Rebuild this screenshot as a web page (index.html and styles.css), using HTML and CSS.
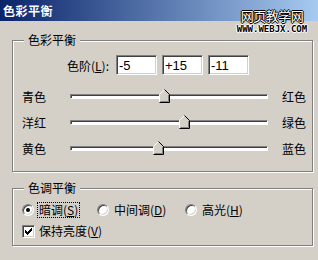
FILE: index.html
```html
<!DOCTYPE html>
<html>
    <head>
        <meta charset="utf-8">
        <title>色彩平衡</title>
        <link rel="stylesheet" href="styles.css">
    </head>
    <body>
        <div class="window">
            <div class="titlebar">
                <span class="title">色彩平衡</span>
                <div class="watermark">
                    <span class="wm-cn">网页教学网</span>
                    <span class="wm-url">WWW.WEBJX.COM</span>
                </div>
            </div>

            <div class="content">
                <fieldset class="group group-balance">
                    <legend>色彩平衡</legend>

                    <div class="levels">
                        <span class="levels-label">色阶(<u>L</u>):</span>
                        <input class="field" type="text" value="-5">
                        <input class="field" type="text" value="+15">
                        <input class="field" type="text" value="-11">
                    </div>

                    <div class="sliders">
                        <span class="lbl">青色</span>
                        <div class="track">
                            <svg class="thumb" style="left: 47.5%;" width="11" height="14" viewBox="0 0 11 14">
                                <polygon points="5.5,0.5 10.5,5.5 10.5,13.5 0.5,13.5 0.5,5.5" fill="#d4d0c8"/>
                                <polyline points="0.5,13 0.5,5.5 5.5,0.5" fill="none" stroke="#fff"/>
                                <polyline points="5.5,0.5 10.5,5.5 10.5,13.5 0.5,13.5" fill="none" stroke="#000"/>
                                <polyline points="9.5,6 9.5,12.5 1.5,12.5" fill="none" stroke="#808080"/>
                            </svg>
                        </div>
                        <span class="lbl lbl-right">红色</span>

                        <span class="lbl">洋红</span>
                        <div class="track">
                            <svg class="thumb" style="left: 57.5%;" width="11" height="14" viewBox="0 0 11 14">
                                <polygon points="5.5,0.5 10.5,5.5 10.5,13.5 0.5,13.5 0.5,5.5" fill="#d4d0c8"/>
                                <polyline points="0.5,13 0.5,5.5 5.5,0.5" fill="none" stroke="#fff"/>
                                <polyline points="5.5,0.5 10.5,5.5 10.5,13.5 0.5,13.5" fill="none" stroke="#000"/>
                                <polyline points="9.5,6 9.5,12.5 1.5,12.5" fill="none" stroke="#808080"/>
                            </svg>
                        </div>
                        <span class="lbl lbl-right">绿色</span>

                        <span class="lbl">黄色</span>
                        <div class="track">
                            <svg class="thumb" style="left: 44.5%;" width="11" height="14" viewBox="0 0 11 14">
                                <polygon points="5.5,0.5 10.5,5.5 10.5,13.5 0.5,13.5 0.5,5.5" fill="#d4d0c8"/>
                                <polyline points="0.5,13 0.5,5.5 5.5,0.5" fill="none" stroke="#fff"/>
                                <polyline points="5.5,0.5 10.5,5.5 10.5,13.5 0.5,13.5" fill="none" stroke="#000"/>
                                <polyline points="9.5,6 9.5,12.5 1.5,12.5" fill="none" stroke="#808080"/>
                            </svg>
                        </div>
                        <span class="lbl lbl-right">蓝色</span>
                    </div>
                </fieldset>

                <fieldset class="group group-tone">
                    <legend>色调平衡</legend>

                    <div class="radios">
                        <label class="opt">
                            <span class="radio checked"></span>
                            <span class="opt-text focus">暗调(<u>S</u>)</span>
                        </label>
                        <label class="opt">
                            <span class="radio"></span>
                            <span class="opt-text">中间调(<u>D</u>)</span>
                        </label>
                        <label class="opt">
                            <span class="radio"></span>
                            <span class="opt-text">高光(<u>H</u>)</span>
                        </label>
                    </div>

                    <label class="opt opt-check">
                        <span class="check">
                            <svg width="7" height="7" viewBox="0 0 7 7">
                                <path d="M0 2h1v3H0zM1 3h1v3H1zM2 4h1v3H2zM3 3h1v3H3zM4 2h1v3H4zM5 1h1v3H5zM6 0h1v3H6z" fill="#000"/>
                            </svg>
                        </span>
                        <span class="opt-text">保持亮度(<u>V</u>)</span>
                    </label>
                </fieldset>
            </div>
        </div>
    </body>
</html>
```

FILE: styles.css
```css
body{
    margin: 0;
    background-color: #d4d0c8;
    font-family: "Noto Sans CJK SC", "Noto Sans", sans-serif;
    font-size: 12px;
    color: #000;
}
.window{
    width: 318px;
    height: 260px;
    overflow: hidden;
}

/* title bar */
.titlebar{
    position: relative;
    height: 21px;
    background: linear-gradient(to right, #0a246a, #a6caf0);
}
.title{
    display: block;
    padding-left: 3px;
    line-height: 21px;
    color: #fff;
    font-weight: bold;
    font-size: 12px;
    letter-spacing: 0.5px;
}
.watermark{
    position: absolute;
    left: 236px;
    top: 9px;
    width: 72px;
    display: flex;
    flex-direction: column;
    align-items: center;
}
.wm-cn{
    color: #fff;
    font-size: 13px;
    line-height: 14px;
    letter-spacing: -0.5px;
    text-shadow: 1px 0 #000, -1px 0 #000, 0 1px #000, 0 -1px #000;
}
.wm-url{
    margin-top: 2px;
    color: #000;
    font-family: "DejaVu Sans Mono", monospace;
    font-weight: bold;
    font-size: 9px;
    line-height: 8px;
    text-shadow: 1px 0 #fff, -1px 0 #fff, 0 1px #fff, 0 -1px #fff;
}

/* group boxes */
.content{
    padding: 12px 0 0 12px;
}
.group{
    box-sizing: border-box;
    width: 301px;
    margin: 0;
    padding: 0;
    border: 1px solid #808080;
    box-shadow: 1px 1px 0 #fff, inset 1px 1px 0 #fff;
}
.group legend{
    margin-left: 11px;
    padding: 0 4px;
    line-height: 14px;
    background-color: #d4d0c8;
}
.group-balance{
    padding-bottom: 10px;
}
.group-tone{
    margin-top: 9px;
    padding-bottom: 6px;
}

/* levels row */
.levels{
    display: flex;
    align-items: center;
    margin: 8px 0 0 54px;
}
.levels-label{
    width: 49px;
}
.field{
    box-sizing: border-box;
    width: 41px;
    height: 20px;
    margin: 0 5px 0 0;
    padding: 0 0 0 2px;
    border: 1px solid;
    border-color: #808080 #fff #fff #808080;
    box-shadow: inset 1px 1px 0 #404040, inset -1px -1px 0 #d4d0c8;
    background-color: #fff;
    font-family: "Liberation Sans", Arial, sans-serif;
    font-size: 13px;
    color: #000;
    outline: none;
}

/* sliders */
.sliders{
    display: grid;
    grid-template-columns: 48px 198px 1fr;
    grid-auto-rows: 26px;
    align-items: center;
    margin: 8px 0 0 9px;
}
.lbl{
    white-space: nowrap;
}
.lbl-right{
    padding-left: 14px;
}
.track{
    position: relative;
    box-sizing: border-box;
    height: 5px;
    border: 1px solid;
    border-color: #808080 #fff #fff #808080;
    box-shadow: inset 1px 1px 0 #404040;
    background-color: #fff;
}
.thumb{
    position: absolute;
    top: -6px;
    margin-left: -5px;
    display: block;
}

/* tone options */
.radios{
    display: grid;
    grid-template-columns: 75px 88px auto;
    margin: 7px 0 0 9px;
}
.opt{
    display: flex;
    align-items: center;
    height: 16px;
}
.opt-check{
    margin: 5px 0 0 9px;
}
.opt-text{
    padding: 0 1px;
    line-height: 14px;
    border: 1px solid transparent;
}
.opt-text.focus{
    border: 1px dotted #000;
}
.radio{
    position: relative;
    box-sizing: border-box;
    width: 12px;
    height: 12px;
    margin-right: 3px;
    border: 1px solid;
    border-color: #808080 #fff #fff #808080;
    border-radius: 50%;
    box-shadow: inset 1px 1px 0 #404040, inset -1px -1px 0 #d4d0c8;
    background-color: #fff;
}
.radio.checked::after{
    content: "";
    position: absolute;
    left: 3px;
    top: 3px;
    width: 4px;
    height: 4px;
    border-radius: 50%;
    background-color: #000;
}
.check{
    box-sizing: border-box;
    width: 13px;
    height: 13px;
    margin-right: 2px;
    display: flex;
    align-items: center;
    justify-content: center;
    border: 1px solid;
    border-color: #808080 #fff #fff #808080;
    box-shadow: inset 1px 1px 0 #404040, inset -1px -1px 0 #d4d0c8;
    background-color: #fff;
}
```
